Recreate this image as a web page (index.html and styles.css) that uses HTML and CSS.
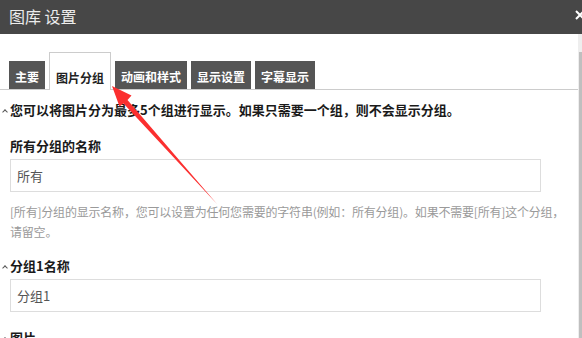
FILE: index.html
```html
<!DOCTYPE html>
<html lang="zh-CN">
<head>
  <meta charset="UTF-8">
  <title>图库 设置</title>
  <link rel="stylesheet" href="styles.css">
</head>
<body>

<div class="dialog">
  <!-- Title bar -->
  <div class="titlebar">
    <span class="title">图库 设置</span>
    <svg class="close" width="10" height="10" viewBox="0 0 10 10">
      <path d="M1 1 L9 9 M9 1 L1 9" stroke="#fff" stroke-width="2" fill="none"/>
    </svg>
  </div>

  <div class="main">
    <div class="content">
      <!-- Tabs -->
      <div class="tabs">
        <div class="tab">主要</div>
        <div class="tab active">图片分组</div>
        <div class="tab">动画和样式</div>
        <div class="tab">显示设置</div>
        <div class="tab">字幕显示</div>
      </div>

      <div class="panel">
        <div class="notice fold">您可以将图片分为最多5个组进行显示。如果只需要一个组，则不会显示分组。</div>

        <div class="label">所有分组的名称</div>
        <input class="field" type="text" value="所有">
        <div class="help">[所有]分组的显示名称，您可以设置为任何您需要的字符串(例如：所有分组)。如果不需要[所有]这个分组，请留空。</div>

        <div class="label fold group">分组1名称</div>
        <input class="field" type="text" value="分组1">

        <div class="label fold pics">图片</div>
      </div>
    </div>

    <!-- Scrollbar -->
    <div class="scrollbar"><div class="thumb"></div></div>
  </div>

  <!-- Red annotation arrow -->
  <svg class="arrow" width="582" height="338" viewBox="0 0 582 338">
    <polygon points="112,86 131.5,95.5 127.5,100 217,204 123.5,103.5 119.5,106.5" fill="#fb2f2f"/>
  </svg>
</div>

</body>
</html>
```

FILE: styles.css
```css
body { margin: 0; font-family: "Noto Sans CJK SC", "Microsoft YaHei", sans-serif; background: #fff; }
.dialog { position: relative; width: 582px; height: 338px; overflow: hidden; background: #fff; }

/* Title bar */
.titlebar {
  height: 34px;
  background: #474747;
  display: flex;
  align-items: center;
  justify-content: space-between;
  padding-left: 9px;
}
.title { color: #ececec; font-size: 16px; line-height: 20px; margin-top: -2px; }
.close { margin-right: -3px; margin-top: -5px; }

.main { display: flex; height: 304px; }
.content { flex: 1; }

/* Scrollbar */
.scrollbar { width: 4px; background: #eeeeee; padding-top: 18px; box-sizing: border-box; }
.thumb { margin-left: 1px; width: 3px; height: 100%; background: #bfbfbf; }

/* Tabs */
.tabs {
  display: flex;
  align-items: flex-end;
  gap: 4px;
  padding: 18px 0 0 9px;
  border-bottom: 1px solid #cccccc;
}
.tab {
  background: #555555;
  color: #fff;
  font-size: 12px;
  font-weight: bold;
  line-height: 24px;
  padding: 4px 6px 0;
}
.tab.active {
  background: #fff;
  color: #222;
  border: 1px solid #cccccc;
  border-bottom: none;
  padding-top: 13px;
  margin-bottom: -1px;
}

/* Panel */
.panel { padding: 0 0 0 10px; }
.notice { margin-top: 10px; font-size: 13px; font-weight: bold; color: #1a1a1a; line-height: 20px; }
.label { margin-top: 16px; font-size: 13px; font-weight: bold; color: #1a1a1a; line-height: 20px; }
.label.group { margin-top: 14px; }
.label.pics { margin-top: 16px; }
.field {
  display: block;
  margin: 3px 0 0;
  width: 531px;
  height: 33px;
  box-sizing: border-box;
  border: 1px solid #dddddd;
  padding: 0 6px;
  font-family: inherit;
  font-size: 13px;
  color: #555;
  outline: none;
}
.help { margin-top: 10px; padding-right: 8px; font-size: 12px; line-height: 20px; letter-spacing: -0.2px; color: #9a9a9a; }

/* Fold caret */
.fold { position: relative; }
.fold::before {
  content: "";
  position: absolute;
  left: -7px;
  top: 10px;
  width: 3px;
  height: 3px;
  border-left: 1px solid #555;
  border-top: 1px solid #555;
  transform: rotate(45deg);
}

.arrow { position: absolute; top: 0; left: 0; pointer-events: none; }
```
